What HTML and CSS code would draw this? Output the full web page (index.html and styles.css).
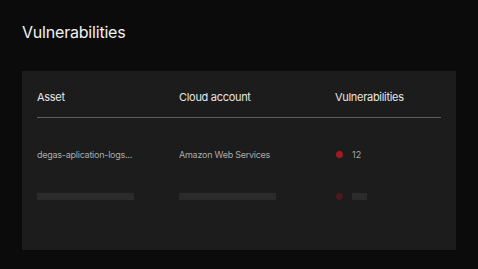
FILE: index.html
```html
<!DOCTYPE html>
<html>
<head>
<meta charset="utf-8">
<link rel="stylesheet" href="styles.css">
</head>
<body>
<div class="page">
  <h1 class="title">Vulnerabilities</h1>
  <div class="card">
    <div class="row head">
      <div class="cell">Asset</div>
      <div class="cell">Cloud account</div>
      <div class="cell">Vulnerabilities</div>
    </div>
    <div class="row data">
      <div class="cell">degas-aplication-logs...</div>
      <div class="cell">Amazon Web Services</div>
      <div class="cell vuln"><span class="dot"></span><span>12</span></div>
    </div>
    <div class="row skel">
      <div class="cell"><span class="bar bar-long"></span></div>
      <div class="cell"><span class="bar bar-long"></span></div>
      <div class="cell vuln"><span class="dot dim"></span><span class="bar bar-short"></span></div>
    </div>
  </div>
</div>
</body>
</html>
```
FILE: styles.css
```css
* { box-sizing: border-box; }
html, body { margin: 0; padding: 0; }
body {
  background: #0b0b0b;
  font-family: "Inter", "Noto Sans", sans-serif;
  width: 478px;
  height: 269px;
  overflow: hidden;
}
.page {
  padding: 22px 22px 0 22px;
}
.title {
  margin: 0;
  font-size: 16px;
  font-weight: 400;
  line-height: 20px;
  color: #f2f2f2;
  letter-spacing: -0.2px;
}
.card {
  margin-top: 29px;
  background: #1c1c1c;
  height: 179px;
  padding: 0 15px;
}
.row {
  display: grid;
  grid-template-columns: 142px 156px 1fr;
  align-items: center;
}
.head {
  height: 47px;
  padding-top: 6px;
  border-bottom: 1px solid #5e5e5e;
  font-size: 11px;
  letter-spacing: -0.3px;
  color: #e6e6e6;
}
.data {
  margin-top: 16px;
  height: 40px;
  font-size: 9px;
  letter-spacing: -0.25px;
  color: #ababab;
}
.skel {
  height: 44px;
}
.vuln {
  display: flex;
  align-items: center;
  gap: 9px;
  padding-left: 1px;
  letter-spacing: 0;
}
.dot {
  width: 7px;
  height: 7px;
  border-radius: 50%;
  background: #a2191f;
  display: block;
}
.dot.dim { background: #4a1a1c; }
.bar {
  display: block;
  height: 7px;
  background: #2b2b2b;
}
.bar-long { width: 97px; }
.bar-short { width: 15px; }
```
